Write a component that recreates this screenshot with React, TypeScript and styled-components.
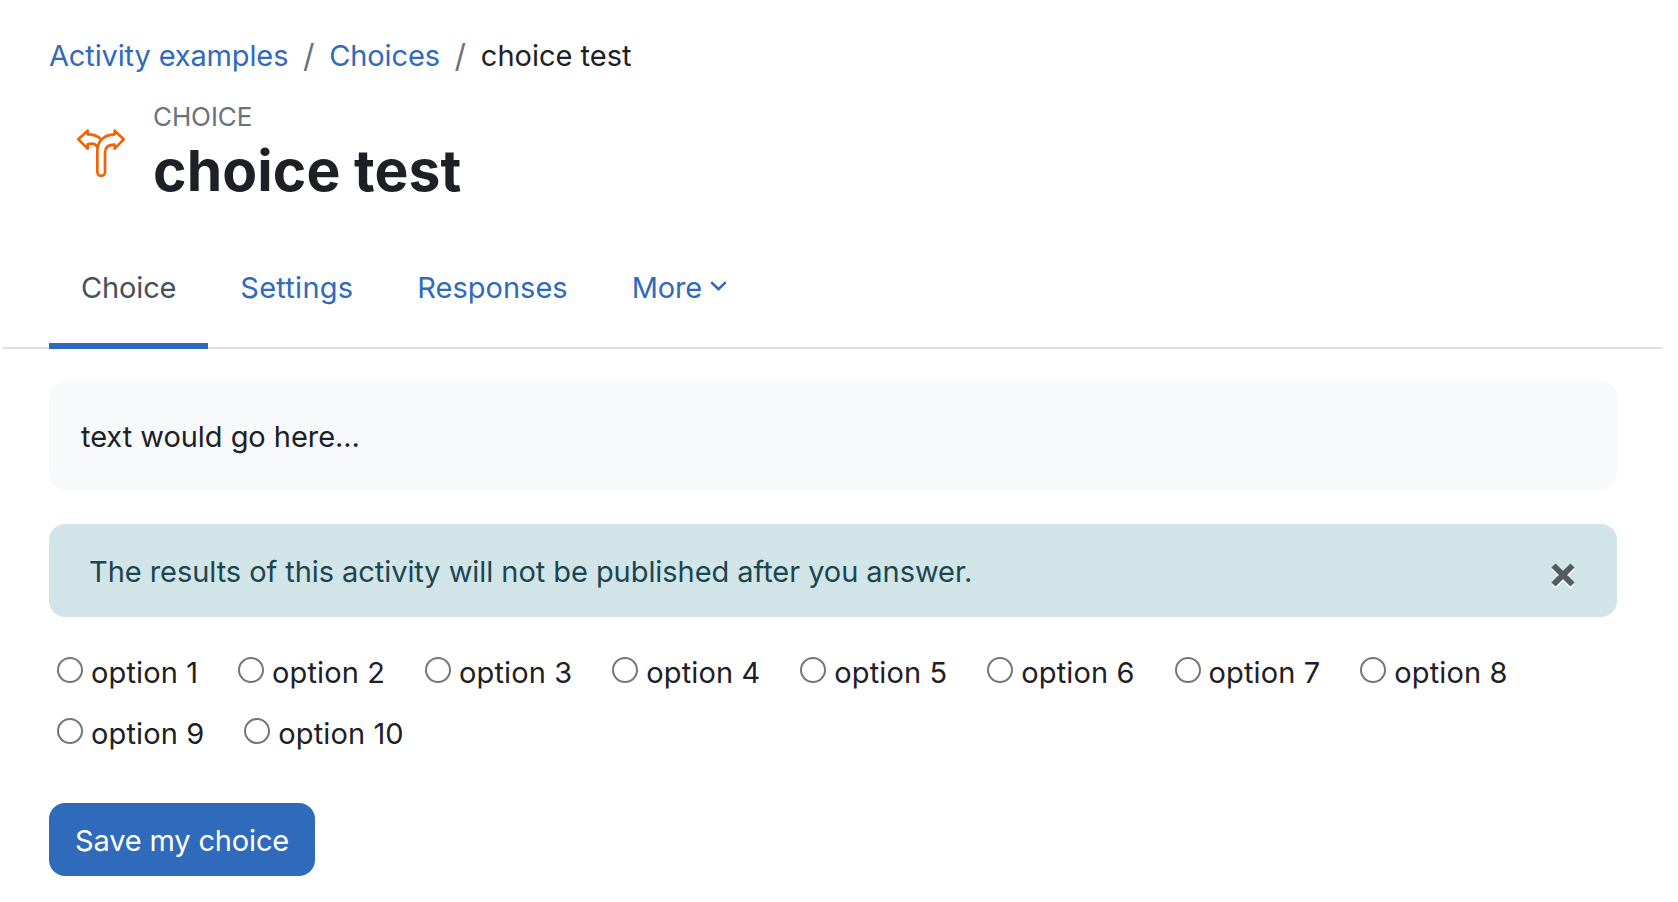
import { useState } from "react";
import styled, { createGlobalStyle } from "styled-components";

const options = Array.from({ length: 10 }, (_, i) => `option ${i + 1}`);

const tabs = [
  { label: "Choice", spacing: -0.15 },
  { label: "Settings", spacing: 0.25 },
  { label: "Responses", spacing: 0 },
];

function App() {
  const [selected, setSelected] = useState("");

  return (
    <Page>
      <GlobalStyle />
      <Breadcrumb>
        <Crumb href="#">Activity examples</Crumb>
        <Divider>/</Divider>
        <Crumb href="#">Choices</Crumb>
        <Divider>/</Divider>
        <span>choice test</span>
      </Breadcrumb>

      <Header>
        <ChoiceIcon viewBox="51 57 144 144">
          <path d="M164 73V62L191 88L164 116V104C146 104 135 112 135 128V186A11.5 11.5 0 0 1 112 186V122C112 92 134 74 164 73Z" />
          <path d="M123 88C114 78 102 73 83 73V62L55 88L83 116V103C96 99 107 102 112 112" />
        </ChoiceIcon>
        <div>
          <ActivityType>CHOICE</ActivityType>
          <Title>choice test</Title>
        </div>
      </Header>

      <TabBar>
        {tabs.map((tab, i) => (
          <Tab key={tab.label} href="#" $active={i === 0} $spacing={tab.spacing}>
            {tab.label}
          </Tab>
        ))}
        <Tab href="#">
          More
          <Chevron viewBox="0 0 17 10">
            <path d="M1.2 1.2L8.5 8.2L15.8 1.2" />
          </Chevron>
        </Tab>
      </TabBar>

      <Content>
        <Intro>text would go here...</Intro>
        <Alert>
          <span>The results of this activity will not be published after you answer.</span>
          <CloseButton aria-label="Close">
            <svg viewBox="0 0 24 26">
              <path stroke="#fff" d="M2.5 4.5L21.5 23.5M21.5 4.5L2.5 23.5" />
              <path stroke="#545c5d" d="M2.5 2.5L21.5 21.5M21.5 2.5L2.5 21.5" />
            </svg>
          </CloseButton>
        </Alert>
        <Options>
          {options.map((option) => (
            <Option key={option}>
              <Radio
                type="radio"
                name="answer"
                checked={selected === option}
                onChange={() => setSelected(option)}
              />
              {option}
            </Option>
          ))}
        </Options>
        <SaveButton>Save my choice</SaveButton>
      </Content>
    </Page>
  );
}

const GlobalStyle = createGlobalStyle`
  * {
    box-sizing: border-box;
  }
  body {
    margin: 0;
    background: #fff;
    color: #1d2125;
    font-family: Inter, "Liberation Sans", sans-serif;
    font-size: 29px;
    line-height: 45px;
  }
`;

const Page = styled.div`
  height: 902px;
  padding: 33px 15px 0 3px;
  overflow: hidden;
`;

const Breadcrumb = styled.nav`
  display: flex;
  height: 45px;
  padding-left: 46px;
`;

const Crumb = styled.a`
  color: #306aba;
  letter-spacing: -0.14px;
  text-decoration: none;
`;

const Divider = styled.span`
  width: 41px;
  text-align: center;
  font-size: 32px;
  color: #6a737b;
`;

const Header = styled.header`
  display: flex;
  gap: 28px;
  height: 175px;
  padding: 22px 0 0 74px;
`;

const ChoiceIcon = styled.svg`
  width: 48px;
  height: 48px;
  margin-top: 29px;
  fill: none;
  stroke: #f16303;
  stroke-width: 8;
  stroke-linejoin: round;
`;

const ActivityType = styled.div`
  font-size: 26px;
  line-height: 34px;
  letter-spacing: -0.1px;
  color: #6a737b;
`;

const Title = styled.h1`
  margin: 0;
  font-size: 57px;
  line-height: 74px;
  font-weight: 700;
  letter-spacing: 0.1px;
`;

const TabBar = styled.nav`
  display: flex;
  height: 96px;
  padding-left: 46px;
  border-bottom: 2px solid #dee2e6;
`;

const Tab = styled.a<{ $active?: boolean; $spacing?: number }>`
  display: flex;
  height: 96px;
  padding: 12px 32px 0;
  border-bottom: 6px solid ${({ $active }) => ($active ? "#306aba" : "transparent")};
  color: ${({ $active }) => ($active ? "#495057" : "#306aba")};
  letter-spacing: ${({ $spacing = -0.1 }) => $spacing}px;
  text-decoration: none;
`;

const Chevron = styled.svg`
  width: 17px;
  height: 10px;
  margin: 16px 0 0 8px;
  fill: none;
  stroke: currentColor;
  stroke-width: 2.5;
`;

const Content = styled.main`
  padding: 32px 46px 0;
`;

const Intro = styled.div`
  height: 109px;
  padding: 33px 32px;
  border-radius: 16px;
  background: #f8f9fb;
  letter-spacing: -0.05px;
`;

const Alert = styled.div`
  display: flex;
  justify-content: space-between;
  height: 93px;
  margin-top: 34px;
  padding: 25px 42px 0 40px;
  border-radius: 16px;
  background: #d1e4e8;
  color: #1b4650;
  letter-spacing: -0.06px;
`;

const CloseButton = styled.button`
  width: 24px;
  height: 26px;
  margin-top: 14px;
  padding: 0;
  border: 0;
  background: none;
  cursor: pointer;

  svg {
    display: block;
    stroke-width: 6;
  }
`;

const Options = styled.div`
  display: flex;
  flex-wrap: wrap;
  gap: 16px 40px;
  padding: 33px 0 0 8px;
`;

const Option = styled.label`
  display: flex;
  gap: 8px;
  letter-spacing: 0.12px;
`;

const Radio = styled.input`
  appearance: none;
  width: 26px;
  height: 26px;
  margin: 7px 0 0;
  border: 2px solid #767676;
  border-radius: 50%;

  &:checked {
    border-width: 8px;
    border-color: #306aba;
  }
`;

const SaveButton = styled.button`
  height: 73px;
  margin-top: 47px;
  padding: 2px 26px 0;
  border: 0;
  border-radius: 16px;
  background: #306aba;
  color: #fff;
  font: inherit;
  letter-spacing: -0.16px;
`;

export default App;
